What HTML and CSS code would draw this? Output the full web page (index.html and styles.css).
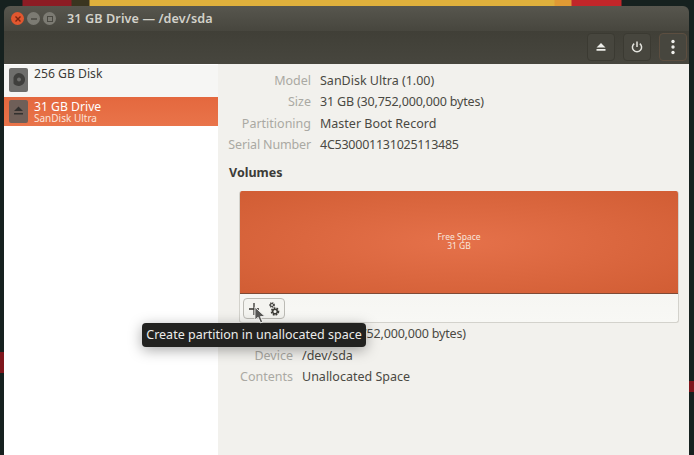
FILE: index.html
```html
<!DOCTYPE html>
<html lang="en">
<head>
  <meta charset="UTF-8" />
  <meta name="viewport" content="width=device-width, initial-scale=1.0" />
  <title>31 GB Drive — /dev/sda</title>
  <link rel="stylesheet" href="styles.css">
</head>
<body>
  <div class="window">
    <!-- title bar -->
    <div class="titlebar">
      <div class="win-buttons">
        <span class="win-btn close">
          <svg width="8" height="8" viewBox="0 0 8 8"><path d="M1.5 1.5l5 5M6.5 1.5l-5 5" stroke="#7d2410" stroke-width="1.4"/></svg>
        </span>
        <span class="win-btn">
          <svg width="8" height="8" viewBox="0 0 8 8"><path d="M1 4h6" stroke="#4a4942" stroke-width="1.3"/></svg>
        </span>
        <span class="win-btn">
          <svg width="8" height="8" viewBox="0 0 8 8"><rect x="1.5" y="1.5" width="5" height="5" fill="none" stroke="#4a4942"/></svg>
        </span>
      </div>
      <span class="win-title">31 GB Drive — /dev/sda</span>
    </div>

    <!-- toolbar -->
    <div class="toolbar">
      <button class="tool-button">
        <svg width="14" height="14" viewBox="0 0 14 14"><path d="M7 3l4.500 4.500h-9z M2.500 9h9v1.800h-9z" fill="#eeeeea"/></svg>
      </button>
      <button class="tool-button">
        <svg width="14" height="14" viewBox="0 0 14 14"><path d="M4.200 3.600a4.600 4.600 0 1 0 5.600 0" fill="none" stroke="#e4e4de" stroke-width="1.500"/><path d="M7 1.500v5.500" stroke="#e4e4de" stroke-width="1.500"/></svg>
      </button>
      <button class="tool-button menu">
        <svg width="14" height="16" viewBox="0 0 14 16"><circle cx="7" cy="2.500" r="1.700" fill="#eeeeea"/><circle cx="7" cy="8" r="1.700" fill="#eeeeea"/><circle cx="7" cy="13.500" r="1.700" fill="#eeeeea"/></svg>
      </button>
    </div>

    <div class="content">
      <!-- disk list -->
      <div class="sidebar">
        <div class="disk-row">
          <span class="disk-icon">
            <svg width="17" height="18" viewBox="0 0 17 18"><path d="M8.500 2a6.500 6.500 0 1 1-5 10.600V6.400A6.500 6.500 0 0 1 8.500 2z" fill="#3f3f3d"/><circle cx="9" cy="8.500" r="2" fill="#6e6e6c"/></svg>
          </span>
          <div class="disk-text"><div class="disk-name">256 GB Disk</div></div>
        </div>
        <div class="disk-row selected">
          <span class="disk-icon">
            <svg width="17" height="18" viewBox="0 0 17 18"><path d="M8.500 3.500l4.500 4.500H4zM4 10h9v1.400H4z" fill="#33312f"/></svg>
          </span>
          <div class="disk-text">
            <div class="disk-name">31 GB Drive</div>
            <div class="disk-sub">SanDisk Ultra</div>
          </div>
        </div>
      </div>

      <!-- details -->
      <div class="main">
        <div class="details">
          <span class="label">Model</span><span class="value">SanDisk Ultra (1.00)</span>
          <span class="label">Size</span><span class="value digits">31 GB (30,752,000,000 bytes)</span>
          <span class="label">Partitioning</span><span class="value">Master Boot Record</span>
          <span class="label tight">Serial Number</span><span class="value serial">4C530001131025113485</span>
        </div>
        <h2 class="volumes-title">Volumes</h2>
        <div class="volume-card">
          <div class="volume-bar">
            <span>Free Space</span>
            <span>31 GB</span>
          </div>
          <div class="volume-tools">
            <div class="tool-group">
              <span class="small-tool plus">
                <svg width="12" height="12" viewBox="0 0 12 12"><path d="M6 0v12M1 6h10" stroke="#33322e" stroke-width="1.300"/></svg>
              </span>
              <span class="small-tool">
                <svg width="14" height="16" viewBox="0 0 14 16">
                  <circle cx="8" cy="10.500" r="3.400" fill="none" stroke="#3c3b37" stroke-width="1.800" stroke-dasharray="1.700 1.150"/>
                  <circle cx="8" cy="10.500" r="2.300" fill="none" stroke="#3c3b37" stroke-width="1.500"/>
                  <circle cx="5" cy="4" r="2.200" fill="none" stroke="#3c3b37" stroke-width="1.300" stroke-dasharray="1.150 .75"/>
                  <circle cx="5" cy="4" r="1.500" fill="none" stroke="#3c3b37" stroke-width="1"/>
                </svg>
              </span>
            </div>
          </div>
        </div>
        <div class="details partition">
          <span class="label">Size</span><span class="value digits">31 GB (30,752,000,000 bytes)</span>
          <span class="label">Device</span><span class="value">/dev/sda</span>
          <span class="label">Contents</span><span class="value">Unallocated Space</span>
        </div>
      </div>
    </div>
  </div>

  <!-- tooltip and pointer lie over the window -->
  <div class="tooltip">Create partition in unallocated space</div>
  <svg class="cursor" width="12" height="18" viewBox="0 0 13 19"><path d="M1 1v14l3.500-3 2.500 6 2.500-1-2.500-5.800H12z" fill="#565654" stroke="#f4f4f2" stroke-width="1"/></svg>
</body>
</html>
```

FILE: styles.css
```css
* {
  margin: 0;
  padding: 0;
  box-sizing: border-box;
  font-family: 'Noto Sans', 'Open Sans', sans-serif;
}
html, body {
  height: 455px;
  overflow: hidden;
}
body {
  position: relative;
  padding: 6px 5px 0 4px;
  background-color: #16211f;
  background-image: linear-gradient(90deg, #16211f 22px, #8c1c24 23px, #8c1c24 71px, #3a3520 72px, #3a3520 89px, #dfb03c 90px, #dfb03c 554px, #e09a34 555px, #e09a34 571px, #c2262a 572px, #c2262a 621px, #16211f 622px);
  background-size: 100% 6px;
  background-repeat: no-repeat;
}
body::before, body::after {
  content: "";
  position: absolute;
  background-color: #7e161c;
}
body::before {
  left: 0;
  top: 352px;
  width: 4px;
  height: 21px;
}
body::after {
  right: 0;
  top: 381px;
  width: 5px;
  height: 11px;
}
.window {
  height: 449px;
  display: flex;
  flex-direction: column;
  border-radius: 6px 6px 0 0;
  overflow: hidden;
}
.titlebar {
  height: 25px;
  display: flex;
  align-items: center;
  padding-left: 7px;
  background: linear-gradient(#57564e, #47463e);
}
.win-buttons {
  display: flex;
  gap: 3px;
  margin-right: 11px;
}
.win-btn {
  width: 13px;
  height: 13px;
  border-radius: 50%;
  background-color: #7c7b73;
  display: flex;
  align-items: center;
  justify-content: center;
}
.win-btn.close {
  background-color: #e2572f;
}
.win-title {
  color: #d3d2ca;
  font-size: 12.6px;
  font-weight: 600;
  letter-spacing: 0.1px;
}
.toolbar {
  height: 33px;
  display: flex;
  justify-content: flex-end;
  align-items: flex-start;
  gap: 8px;
  padding-right: 2px;
  background: linear-gradient(#403f37, #47463e);
}
.tool-button {
  width: 28px;
  height: 28px;
  margin-top: 2px;
  display: flex;
  align-items: center;
  justify-content: center;
  background-color: #47463e;
  border: 1px solid #3b3a32;
  border-radius: 4px;
}
.tool-button.menu {
  border-color: #5c4e40;
}
.content {
  flex: 1;
  display: flex;
}
.sidebar {
  width: 214px;
  padding-top: 1px;
  background-color: #ffffff;
}
.disk-row {
  height: 32px;
  display: flex;
  align-items: flex-start;
  gap: 6px;
  padding: 3px 0 0 5px;
  background-color: #f6f6f4;
  color: #3c3b37;
}
.disk-row.selected {
  height: 29px;
  background: linear-gradient(#e4683e, #e9744a);
  color: #ffffff;
}
.disk-icon {
  width: 19px;
  height: 24px;
  background-color: #6e6e6c;
  border-radius: 2px;
  display: flex;
  align-items: center;
  justify-content: center;
}
.selected .disk-icon {
  height: 23px;
  background-color: #6f5f58;
}
.disk-name {
  font-size: 12.2px;
  line-height: 12px;
}
.selected .disk-name {
  line-height: 14px;
}
.disk-sub {
  margin-top: -1px;
  font-size: 10px;
  line-height: 11px;
  color: #fbe3d9;
}
.main {
  flex: 1;
  padding-top: 6px;
  background-color: #f2f1ed;
}
.details {
  display: grid;
  grid-template-columns: 93px auto;
  justify-content: start;
  column-gap: 9px;
  font-size: 12.5px;
  line-height: 21.33px;
}
.details.partition {
  grid-template-columns: 75px auto;
}
.label {
  text-align: right;
  color: #aaa9a3;
}
.label.tight {
  letter-spacing: -0.15px;
}
.value {
  color: #4a4943;
}
.value.digits {
  letter-spacing: -0.18px;
}
.value.serial {
  letter-spacing: -0.25px;
}
.volumes-title {
  margin: 9px 0 0 11px;
  font-size: 12.5px;
  line-height: 18px;
  font-weight: 700;
  color: #3c3b37;
}
.volume-card {
  width: 440px;
  height: 132px;
  margin: 9px 0 0 21px;
  border: 1px solid #d3d2cc;
  border-top: none;
  border-radius: 3px;
  background: linear-gradient(#eeeeea, #f8f8f5);
  overflow: hidden;
}
.volume-bar {
  height: 103px;
  margin: 0 -1px;
  padding-bottom: 1px;
  display: flex;
  flex-direction: column;
  align-items: center;
  justify-content: center;
  border-bottom: 1px solid #7e4a36;
  background: radial-gradient(ellipse at center, #e5714a 0%, #d15d34 100%);
  color: #f9e6dc;
  font-size: 8.5px;
  line-height: 8.5px;
}
.volume-tools {
  padding: 4px 3px;
}
.tool-group {
  width: 42px;
  height: 21px;
  display: flex;
  align-items: center;
  background-color: #f4f4f0;
  border: 1px solid #bcbbb5;
  border-radius: 4px;
}
.small-tool {
  width: 20px;
  display: flex;
  justify-content: center;
}
.tooltip {
  position: absolute;
  left: 142px;
  top: 323px;
  width: 224px;
  height: 24px;
  text-align: center;
  line-height: 23px;
  font-size: 12.5px;
  color: #ececea;
  background-color: #222220;
  border-radius: 4px;
  box-shadow: 0 3px 14px rgba(0, 0, 0, 0.35);
}
.cursor {
  position: absolute;
  left: 254px;
  top: 306px;
}
```
